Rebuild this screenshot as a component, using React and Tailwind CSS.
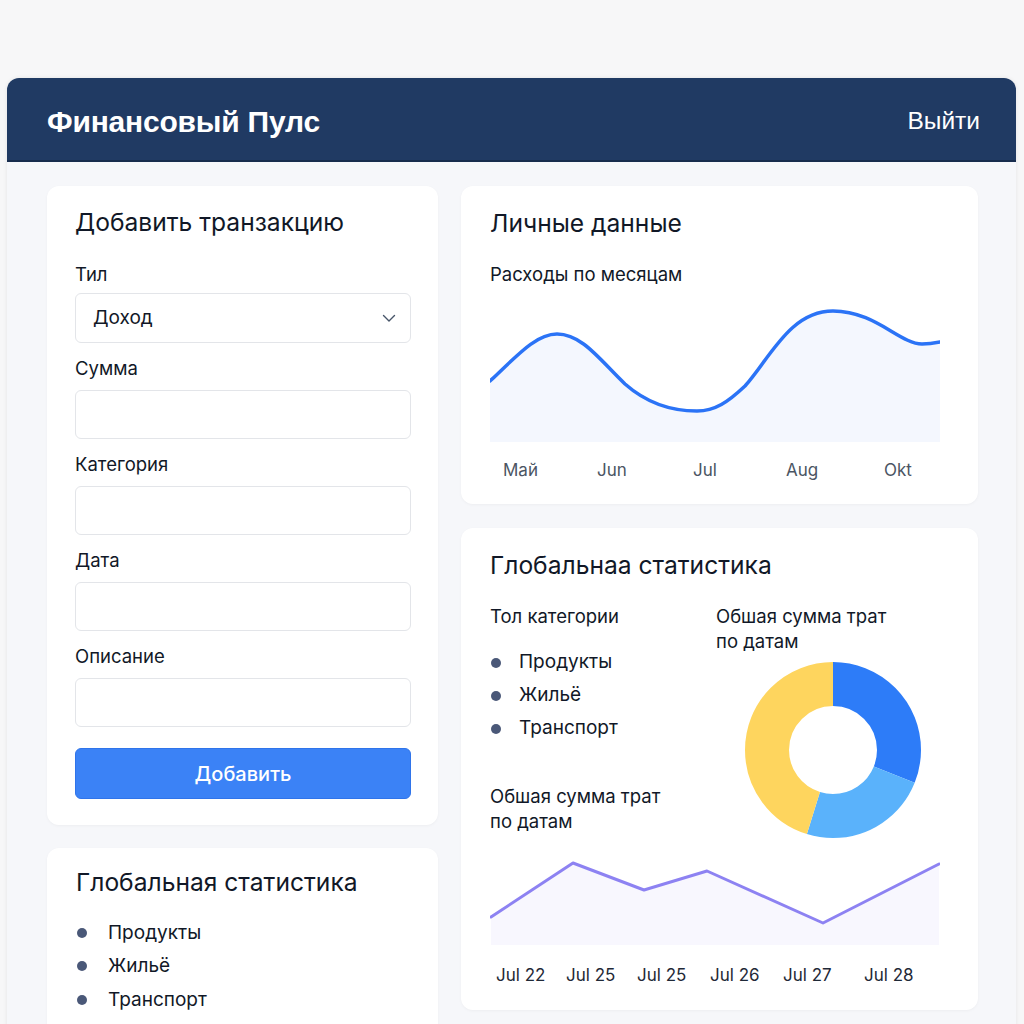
import React from "react";

const FONT = { fontFamily: "Inter, 'Noto Sans', sans-serif" };

function Field({ label, children }) {
  return (
    <div className="mb-[13px]">
      <div className="text-[18.5px] leading-[24px] text-[#111827] mb-[10px]">{label}</div>
      {children}
    </div>
  );
}

function Input() {
  return <div className="h-[49px] rounded-[6px] border border-[#e3e5e9] bg-white" />;
}

function Dot({ className = "" }) {
  return <span className={"inline-block w-[10px] h-[10px] rounded-full bg-[#4a5878] " + className} />;
}

function Donut() {
  const r = 66;
  const c = 2 * Math.PI * r;
  const segs = [
    { color: "#2d7cf8", frac: 111.7 / 360 },
    { color: "#5ab2fb", frac: (197 - 111.7) / 360 },
    { color: "#fed55e", frac: (360 - 197) / 360 },
  ];
  let offset = 0;
  return (
    <svg width="176" height="176" viewBox="0 0 176 176">
      <g transform="rotate(-90 88 88)">
        {segs.map((s, i) => {
          const len = s.frac * c;
          const el = (
            <circle
              key={i}
              cx="88"
              cy="88"
              r={r}
              fill="none"
              stroke={s.color}
              strokeWidth="44"
              strokeDasharray={`${len} ${c - len}`}
              strokeDashoffset={-offset}
            />
          );
          offset += len;
          return el;
        })}
      </g>
    </svg>
  );
}

export default function App() {
  const curve =
    "M0 81 C 25 58, 45 34, 67 34 C 92 34, 110 60, 135 84 C 160 106, 185 111, 207 111 C 225 111, 238 102, 255 86 C 280 58, 300 11, 343 11 C 385 11, 410 44, 432 44 C 440 44, 445 43, 450 42";
  const zig = "M1 62 L83 8 L154 35 L217 16 L333 68 L449 9";
  return (
    <div className="h-[1024px] overflow-hidden bg-[#f7f7f8] pt-[78px] pl-[7px] pr-[8px]" style={FONT}>
      <div className="rounded-t-[12px] bg-[#f6f7fa] shadow-[0_0_4px_rgba(0,0,0,0.08)] overflow-hidden">
        <header className="h-[84px] bg-[#203a63] border-b-2 border-[#172c4d] flex items-center justify-between pl-[40px] pr-[36px] pt-[4px]">
          <div
            className="text-white text-[30px] font-bold tracking-[-0.2px]"
            style={{ fontFamily: "'Liberation Sans', Arial, sans-serif" }}
          >
            Финансовый Пулс
          </div>
          <div
            className="text-white text-[24.5px]"
            style={{ fontFamily: "'Liberation Sans', Arial, sans-serif" }}
          >
            Выйти
          </div>
        </header>

        <main className="flex gap-[23px] pt-[24px] pl-[40px] pr-[38px] pb-[20px]">
          {/* Left column */}
          <div className="w-[391px] flex flex-col gap-[23px]">
            <section className="bg-white rounded-[12px] shadow-[0_1px_3px_rgba(0,0,0,0.04)] pt-[20px] pb-[26px] pl-[28px] pr-[27px]">
              <h2 className="text-[24.6px] leading-[32px] text-[#111827] mb-[24px]">Добавить транзакцию</h2>
              <Field label="Тил">
                <div className="h-[50px] rounded-[6px] border border-[#e3e5e9] bg-white flex items-center justify-between pl-[17px] pr-[14px] -mt-[3px]">
                  <span className="text-[19px] text-[#111827]">Доход</span>
                  <svg width="14" height="9" viewBox="0 0 14 9" fill="none">
                    <path d="M1.5 1.5 L7 7 L12.5 1.5" stroke="#475569" strokeWidth="1.4" strokeLinecap="round" strokeLinejoin="round" />
                  </svg>
                </div>
              </Field>
              <Field label="Сумма"><Input /></Field>
              <Field label="Категория"><Input /></Field>
              <Field label="Дата"><Input /></Field>
              <Field label="Описание"><Input /></Field>
              <button className="mt-[8px] w-full h-[51px] rounded-[6px] bg-[#3b82f6] border border-[#2f74ea] text-white text-[20px] font-medium">
                Добавить
              </button>
            </section>

            <section className="bg-white rounded-[12px] shadow-[0_1px_3px_rgba(0,0,0,0.04)] pt-[18px] pb-[40px] pl-[29px] pr-[27px]">
              <h2 className="text-[24.6px] leading-[32px] text-[#111827] mb-[18px]">Глобальная статистика</h2>
              <ul className="text-[19px] text-[#111827]">
                {["Продукты", "Жильё", "Транспорт"].map((t) => (
                  <li key={t} className="h-[33.5px] flex items-center">
                    <Dot className="ml-[1px] mr-[21px]" />
                    {t}
                  </li>
                ))}
              </ul>
            </section>
          </div>

          {/* Right column */}
          <div className="w-[517px] flex flex-col gap-[24px]">
            <section className="bg-white rounded-[12px] shadow-[0_1px_3px_rgba(0,0,0,0.04)] pt-[21px] pb-[22px] pl-[29px] pr-[38px]">
              <h2 className="text-[24.6px] leading-[32px] text-[#111827]">Личные данные</h2>
              <div className="mt-[22px] text-[18.5px] leading-[26px] text-[#111827]">Расходы по месяцам</div>
              <svg className="mt-[13px] block" width="450" height="142" viewBox="0 0 450 142">
                <path d={curve + " L450 142 L0 142 Z"} fill="#f4f7fe" />
                <path d={curve} fill="none" stroke="#2b73f6" strokeWidth="3.5" strokeLinecap="round" />
              </svg>
              <div className="mt-[16px] flex pl-[13px] text-[17px] leading-[24px] text-[#4b5563]">
                <div className="w-[94px]">Май</div>
                <div className="w-[96px]">Jun</div>
                <div className="w-[93px]">Jul</div>
                <div className="w-[98px]">Aug</div>
                <div>Okt</div>
              </div>
            </section>

            <section className="bg-white rounded-[12px] shadow-[0_1px_3px_rgba(0,0,0,0.04)] pt-[21px] pb-[23px] pl-[29px] pr-[38px]">
              <h2 className="text-[24.6px] leading-[32px] text-[#111827]">Глобальнаа статистика</h2>
              <div className="mt-[23px] flex">
                <div className="w-[226px] text-[18.5px] text-[#111827]">
                  <div className="leading-[25px]">Тол категории</div>
                  <ul className="mt-[17px] text-[19px]">
                    {["Продукты", "Жильё", "Транспорт"].map((t) => (
                      <li key={t} className="h-[33px] flex items-center">
                        <Dot className="ml-[1px] mr-[18px]" />
                        {t}
                      </li>
                    ))}
                  </ul>
                  <div className="mt-[39px] leading-[25px]">
                    Обшая сумма трат
                    <br />
                    по датам
                  </div>
                </div>
                <div className="flex-1 text-[18.5px] text-[#111827]">
                  <div className="leading-[25px]">
                    Обшая сумма трат
                    <br />
                    по датам
                  </div>
                  <div className="mt-[8px] ml-[29px]">
                    <Donut />
                  </div>
                </div>
              </div>
              <svg className="mt-[17px] block" width="450" height="90" viewBox="0 0 450 90">
                <path d={zig + " L449 90 L1 90 Z"} fill="#f8f7fe" />
                <path d={zig} fill="none" stroke="#8d82f2" strokeWidth="3" strokeLinejoin="round" strokeLinecap="round" />
              </svg>
              <div className="mt-[18px] flex pl-[6px] text-[17px] leading-[24px] text-[#1f2937]">
                <div className="w-[70px]">Jul 22</div>
                <div className="w-[71px]">Jul 25</div>
                <div className="w-[73px]">Jul 25</div>
                <div className="w-[73px]">Jul 26</div>
                <div className="w-[81px]">Jul 27</div>
                <div>Jul 28</div>
              </div>
            </section>
          </div>
        </main>
      </div>
    </div>
  );
}
